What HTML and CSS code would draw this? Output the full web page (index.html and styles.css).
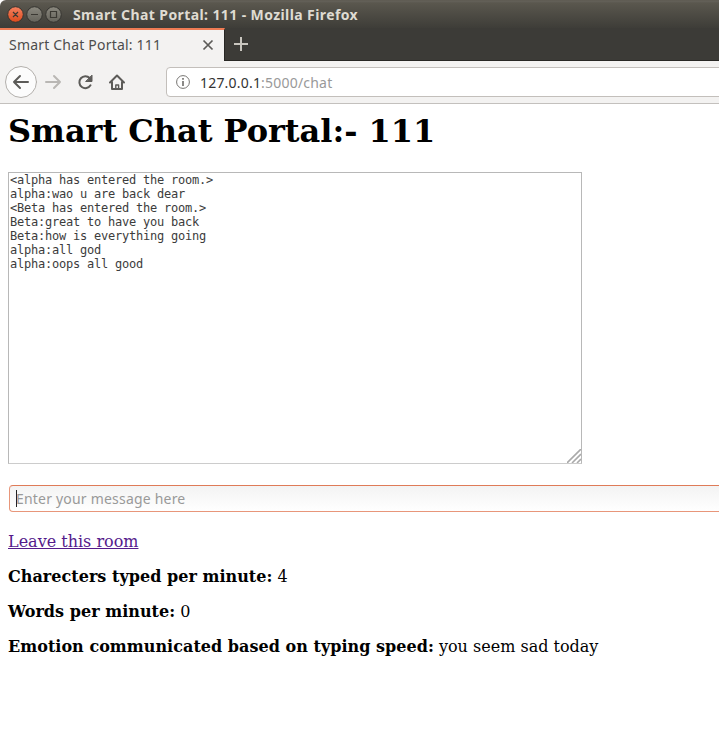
FILE: index.html
```html
<!DOCTYPE html>
<html lang="en">
<head>
<meta charset="utf-8">
<title>Smart Chat Portal: 111</title>
<link rel="stylesheet" href="styles.css">
</head>
<body>
<div class="window">
  <header class="titlebar">
    <svg class="controls" width="56" height="18" viewBox="0 0 56 18" fill="none">
      <defs>
        <linearGradient id="red" x2="0" y2="1"><stop stop-color="#f58261"/><stop offset="1" stop-color="#dd4a1b"/></linearGradient>
        <linearGradient id="grey" x2="0" y2="1"><stop stop-color="#8b897f"/><stop offset="1" stop-color="#65635b"/></linearGradient>
      </defs>
      <circle cx="8.500" cy="8.500" r="7.800" fill="url(#red)" stroke="#353430"/>
      <circle cx="27.500" cy="8.500" r="7.800" fill="url(#grey)" stroke="#353430"/>
      <circle cx="46.500" cy="8.500" r="7.800" fill="url(#grey)" stroke="#353430"/>
      <path d="M6 6l5 5M11 6l-5 5M24 8.500h7M43.500 5.500h6v6h-6z" stroke="#3b3933" stroke-width="1.200"/>
    </svg>
    <span class="window-title">Smart Chat Portal: 111 - Mozilla Firefox</span>
  </header>
  <div class="tabs">
    <div class="tab">
      <span class="tab-title">Smart Chat Portal: 111</span>
      <svg width="12" height="12" viewBox="0 0 12 12"><path d="M1.500 1.500l9 9M10.500 1.500l-9 9" stroke="#5c5b58" stroke-width="1.700"/></svg>
    </div>
    <svg class="plus" width="14" height="14" viewBox="0 0 14 14"><path d="M7 0v14M0 7h14" stroke="#c9c6bf" stroke-width="2"/></svg>
  </div>
  <nav class="toolbar">
    <svg width="130" height="34" viewBox="0 0 130 34" fill="none" stroke="#5c5b58" stroke-width="2" stroke-linecap="round" stroke-linejoin="round">
      <circle cx="21" cy="17" r="15.500" fill="#fcfcfc" stroke="#b3b0ac" stroke-width="1"/>
      <path d="M28 17H14M20 11l-6 6 6 6"/>
      <path d="M46 17h14M54 11l6 6-6 6" stroke="#b9b7b4"/>
      <path d="M90.500 20.300A6 6 0 1 1 89.700 13"/>
      <path d="M92 10.500v6h-6z" fill="#5c5b58" stroke-width="1"/>
      <path d="M110 17.500l7-7 7 7M112 17v7h10v-7"/>
      <path d="M115.800 24v-4h2.800v4z" stroke-width="1.400"/>
    </svg>
    <div class="address">
      <svg width="14" height="14" viewBox="0 0 14 14" fill="none" stroke="#777572"><circle cx="7" cy="7" r="6.400"/><path d="M7 6v5M7 3v1.700" stroke-width="1.700"/></svg>
      <span class="url"><b>127.0.0.1</b>:5000/chat</span>
    </div>
  </nav>
  <main>
    <h1>Smart Chat Portal:- 111</h1>
    <div class="log">&lt;alpha has entered the room.&gt;
alpha:wao u are back dear
&lt;Beta has entered the room.&gt;
Beta:great to have you back
Beta:how is everything going
alpha:all god
alpha:oops all good<svg class="grip" width="14" height="14" viewBox="0 0 14 14"><path d="M0 14L14 0M5 14L14 5M10 14L14 10" stroke="#aaa" stroke-width="1.600"/></svg></div>
    <div class="message"><i class="caret"></i><span>Enter your message here</span></div>
    <p><a href="#">Leave this room</a></p>
    <p><b>Charecters typed per minute:</b> 4</p>
    <p><b>Words per minute:</b> 0</p>
    <p><b>Emotion communicated based on typing speed:</b> you seem sad today</p>
  </main>
</div>
</body>
</html>
```
FILE: styles.css
```css
* { box-sizing: border-box; }
body { margin: 0; background: #fff; color: #000; font: 16px/19px "DejaVu Serif", serif; overflow: hidden; }
.window { width: 719px; height: 744px; overflow: hidden; }
.titlebar { height: 28px; display: flex; align-items: center; padding: 1px 0 0 7px; background: linear-gradient(#5b574e 0, #65625a 1px, #5a574e 3px, #3e3d38 28px); border-top-left-radius: 6px; }
.controls { flex: none; }
.window-title { margin-left: 10px; color: #dfdbd2; font: bold 14px/20px "Noto Sans", sans-serif; letter-spacing: 0.4px; white-space: nowrap; }
.tabs { height: 33px; display: flex; background: #3c3b37; border-bottom: 1px solid #282724; }
.tab { width: 225px; height: 33px; display: flex; align-items: center; justify-content: space-between; padding: 0 10px 1px 9px; background: #f3f2f1; border-top: 2px solid #f07c54; border-right: 1px solid #282724; }
.tab-title { color: #4c4c4c; font: 14px/20px "Noto Sans", sans-serif; letter-spacing: 0.2px; white-space: nowrap; }
.plus { margin: 9px 0 0 9px; }
.toolbar { height: 43px; display: flex; align-items: center; padding-bottom: 1px; background: #f3f2f1; border-bottom: 1px solid #c3c0bd; }
.toolbar > svg { flex: none; }
.address { flex: 1; height: 30px; margin: 1px -8px 0 36px; display: flex; align-items: center; padding-left: 9px; background: #fff; border: 1px solid #c3bfbb; border-radius: 4px; }
.url { margin: 2px 0 0 10px; color: #999; font: 14px/20px "Noto Sans", sans-serif; letter-spacing: 0.2px; white-space: nowrap; }
.url b { font-weight: 400; color: #333; }
main { padding: 8px; }
h1 { margin: 0; font: bold 32px/38px "DejaVu Serif", serif; letter-spacing: -0.03px; white-space: nowrap; }
.log { position: relative; width: 574px; height: 292px; margin-top: 22px; padding: 0 1px; border: 1px solid #b8b8b8; border-bottom-color: #ccc; color: #3c3c3c; font: 12px/14px "DejaVu Sans Mono", monospace; letter-spacing: -0.224px; white-space: pre; }
.grip { position: absolute; right: 0; bottom: 0; }
.message { width: 800px; height: 27px; margin: 21px 0 20px 1px; display: flex; align-items: center; padding-left: 6px; border: 1px solid #e8967a; border-top-color: #df7b58; border-radius: 4px; background: linear-gradient(#f3f3f3, #fff); color: #999; font: 14px/20px "Noto Sans", sans-serif; letter-spacing: 0.2px; }
.caret { width: 1px; height: 17px; background: #222; margin-right: -1px; }
p { margin: 0 0 16px; white-space: nowrap; }
p b { letter-spacing: 0.03px; }
a { color: #551a8b; }
```
